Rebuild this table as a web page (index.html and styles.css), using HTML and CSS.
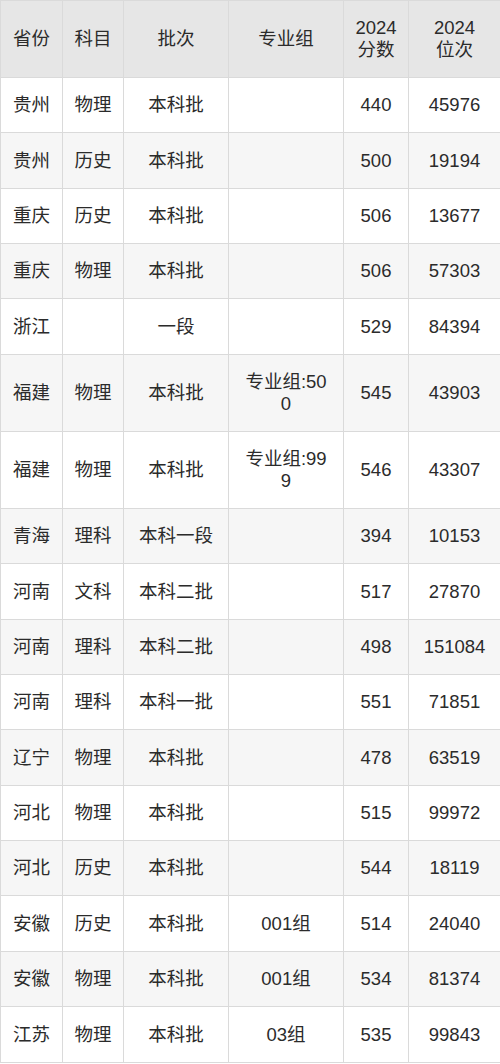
FILE: index.html
```html
<!DOCTYPE html>
<html lang="zh-CN">
<head>
<meta charset="utf-8">
<title>2024 分数位次</title>
<link rel="stylesheet" href="styles.css">
</head>
<body>
<table class="score-table">
  <colgroup>
    <col class="c-prov"><col class="c-subj"><col class="c-batch"><col class="c-group"><col class="c-score"><col class="c-rank">
  </colgroup>
  <thead>
    <tr><th>省份</th><th>科目</th><th>批次</th><th>专业组</th><th>2024<br>分数</th><th>2024<br>位次</th></tr>
  </thead>
  <tbody>
    <tr><td>贵州</td><td>物理</td><td>本科批</td><td class="grp"></td><td>440</td><td>45976</td></tr>
    <tr><td>贵州</td><td>历史</td><td>本科批</td><td class="grp"></td><td>500</td><td>19194</td></tr>
    <tr><td>重庆</td><td>历史</td><td>本科批</td><td class="grp"></td><td>506</td><td>13677</td></tr>
    <tr><td>重庆</td><td>物理</td><td>本科批</td><td class="grp"></td><td>506</td><td>57303</td></tr>
    <tr><td>浙江</td><td></td><td>一段</td><td class="grp"></td><td>529</td><td>84394</td></tr>
    <tr><td>福建</td><td>物理</td><td>本科批</td><td class="grp">专业组:500</td><td>545</td><td>43903</td></tr>
    <tr><td>福建</td><td>物理</td><td>本科批</td><td class="grp">专业组:999</td><td>546</td><td>43307</td></tr>
    <tr><td>青海</td><td>理科</td><td>本科一段</td><td class="grp"></td><td>394</td><td>10153</td></tr>
    <tr><td>河南</td><td>文科</td><td>本科二批</td><td class="grp"></td><td>517</td><td>27870</td></tr>
    <tr><td>河南</td><td>理科</td><td>本科二批</td><td class="grp"></td><td>498</td><td>151084</td></tr>
    <tr><td>河南</td><td>理科</td><td>本科一批</td><td class="grp"></td><td>551</td><td>71851</td></tr>
    <tr><td>辽宁</td><td>物理</td><td>本科批</td><td class="grp"></td><td>478</td><td>63519</td></tr>
    <tr><td>河北</td><td>物理</td><td>本科批</td><td class="grp"></td><td>515</td><td>99972</td></tr>
    <tr><td>河北</td><td>历史</td><td>本科批</td><td class="grp"></td><td>544</td><td>18119</td></tr>
    <tr><td>安徽</td><td>历史</td><td>本科批</td><td class="grp">001组</td><td>514</td><td>24040</td></tr>
    <tr><td>安徽</td><td>物理</td><td>本科批</td><td class="grp">001组</td><td>534</td><td>81374</td></tr>
    <tr><td>江苏</td><td>物理</td><td>本科批</td><td class="grp">03组</td><td>535</td><td>99843</td></tr>
  </tbody>
</table>
</body>
</html>
```
FILE: styles.css
```css
html, body {
  margin: 0;
  padding: 0;
  background: #ffffff;
}
.score-table {
  width: 500px;
  table-layout: fixed;
  border-collapse: collapse;
  font-family: "Liberation Sans", "Noto Sans CJK SC", sans-serif;
  font-size: 18.5px;
  line-height: 21.6px;
  color: #2b2b2b;
}
.c-prov { width: 62px; }
.c-subj { width: 61px; }
.c-batch { width: 105px; }
.c-group { width: 115px; }
.c-score { width: 65px; }
.c-rank { width: 92px; }
.score-table th,
.score-table td {
  border: 1px solid #dadada;
  padding: 16.4px 2px;
  text-align: center;
  vertical-align: middle;
  font-weight: normal;
  white-space: nowrap;
}
.score-table thead th {
  background: #e6e6e6;
}
.score-table tbody tr:nth-child(even) td {
  background: #f6f6f6;
}
.score-table td.grp {
  padding-left: 14px;
  padding-right: 14px;
  white-space: normal;
  word-break: break-all;
}
```
